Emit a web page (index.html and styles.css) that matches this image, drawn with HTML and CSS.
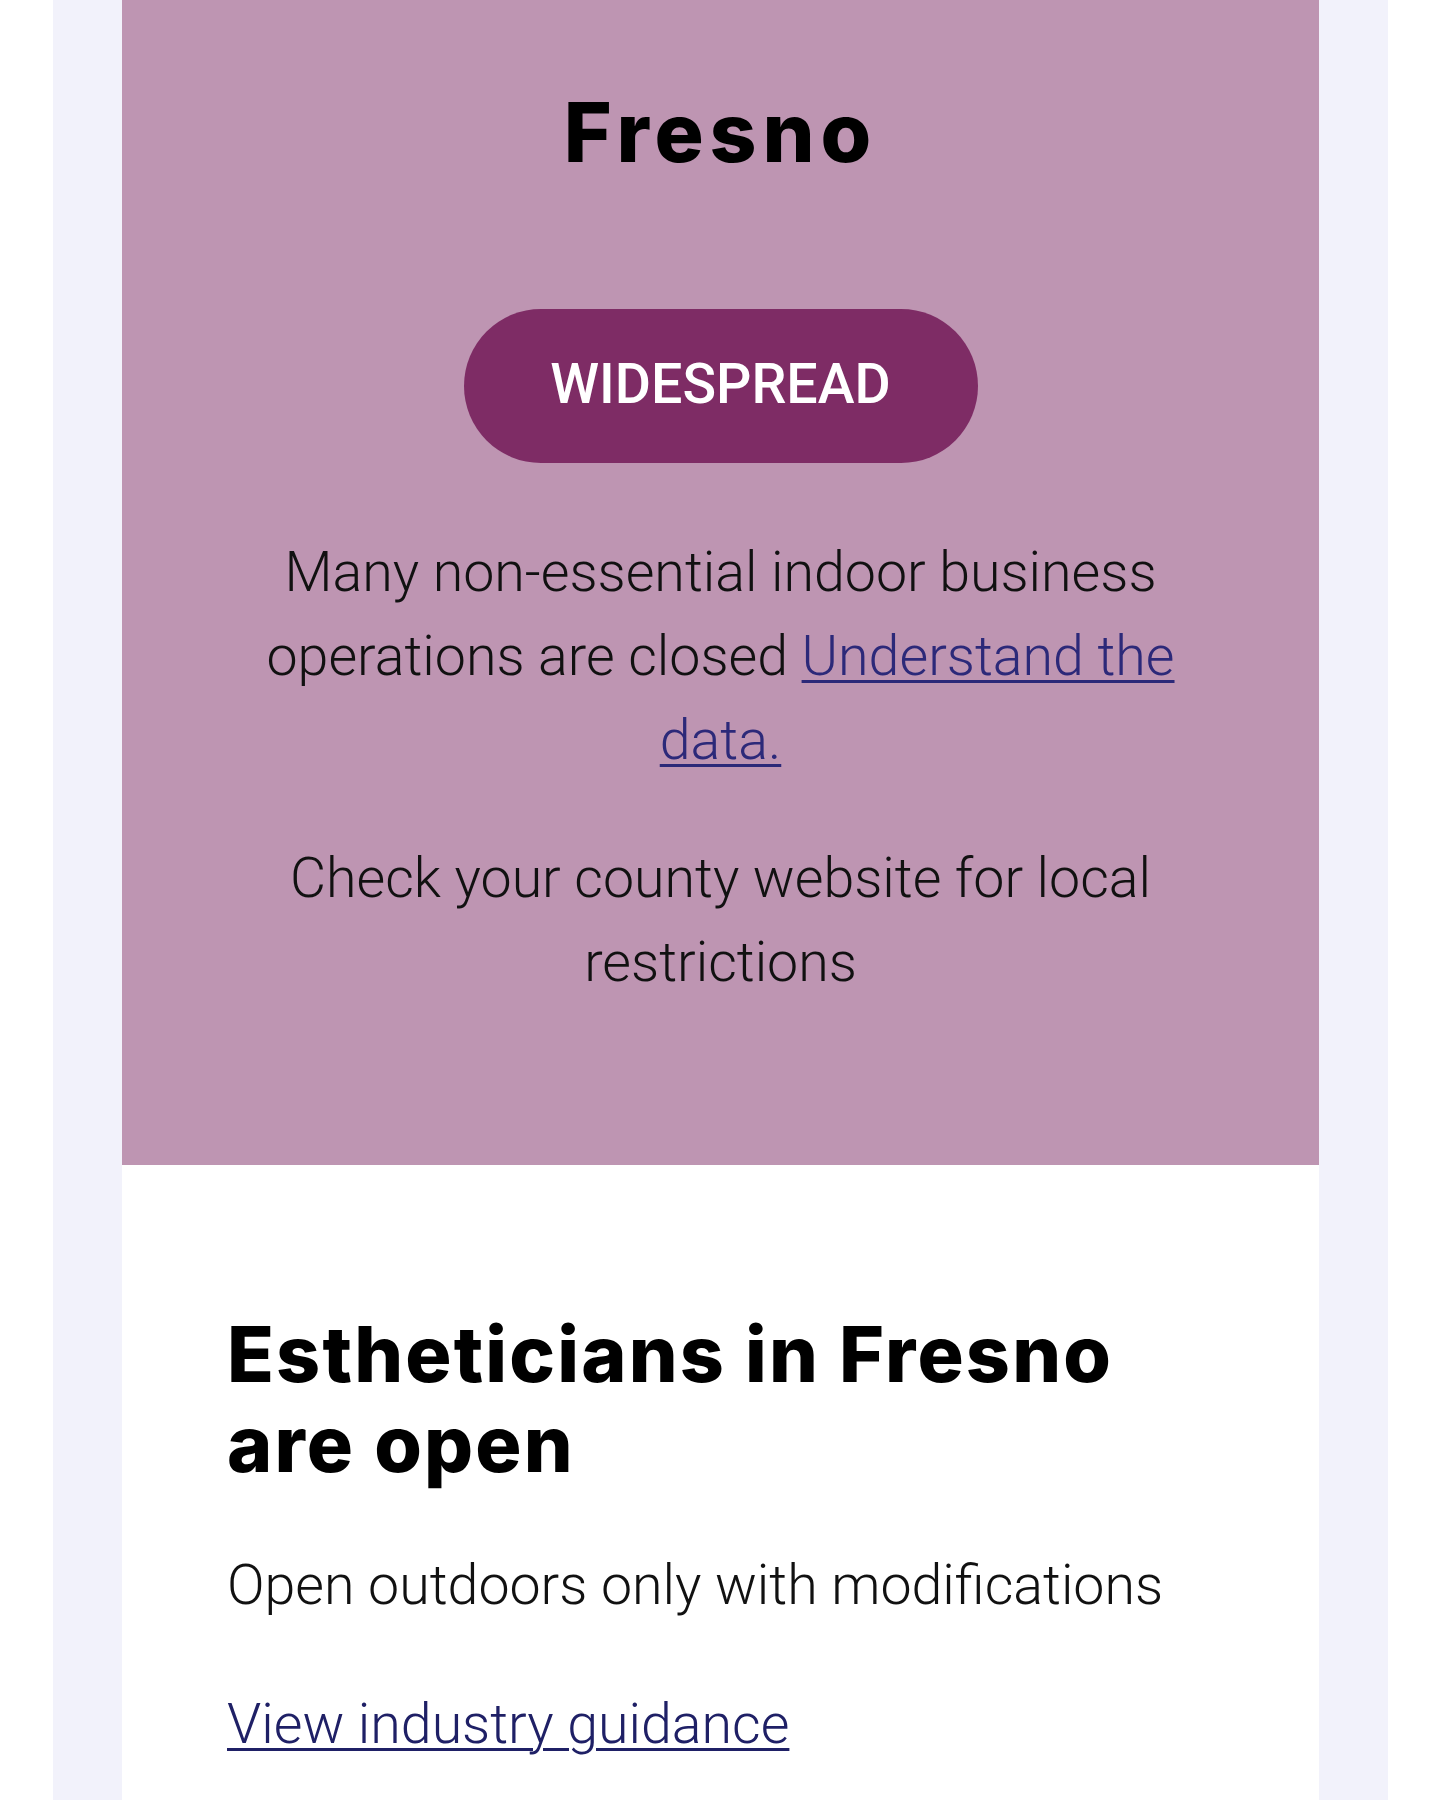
FILE: index.html
```html
<!DOCTYPE html>
<html lang="en">
<head>
<meta charset="utf-8">
<title>Fresno</title>
<link rel="stylesheet" href="styles.css">
</head>
<body>
  <div class="page">
    <main class="card">
      <section class="status">
        <h1 class="county">Fresno</h1>
        <div class="pill">WIDESPREAD</div>
        <p class="status-text">Many non-essential indoor business operations are closed <a href="#" class="link">Understand the data.</a></p>
        <p class="status-text second">Check your county website for local restrictions</p>
      </section>
      <section class="result">
        <h2 class="result-title">Estheticians in Fresno are open</h2>
        <p class="result-text">Open outdoors only with modifications</p>
        <p class="result-text"><a href="#" class="link link-dark">View industry guidance</a></p>
      </section>
    </main>
  </div>
</body>
</html>
```

FILE: styles.css
```css
html, body {
  margin: 0;
  padding: 0;
  background: #ffffff;
}

body {
  font-family: Roboto, "Liberation Sans", Arial, sans-serif;
  color: #111111;
}

.page {
  margin-left: 53px;
  width: 1335px;
  padding: 0 69px;
  box-sizing: border-box;
  background: #f2f2fb;
  min-height: 1800px;
}

.card {
  display: flex;
  flex-direction: column;
}

.status {
  background: #be95b2;
  padding: 84px 100px 160px;
  display: flex;
  flex-direction: column;
  align-items: center;
  text-align: center;
}

.county {
  margin: 0;
  font-family: Inter, "Open Sans", sans-serif;
  font-weight: 800;
  font-size: 82px;
  line-height: 98px;
  letter-spacing: 0.072em;
  color: #000000;
}

.pill {
  margin-top: 127px;
  background: #7e2c65;
  color: #ffffff;
  font-family: Roboto, sans-serif;
  font-weight: 500;
  font-size: 55.5px;
  line-height: 64px;
  padding: 44px 0 46px;
  width: 514px;
  border-radius: 77px;
  text-align: center;
  box-sizing: border-box;
}

.status-text {
  margin: 68px 0 0;
  font-family: Roboto, sans-serif;
  font-weight: 300;
  font-size: 55.5px;
  line-height: 84px;
  color: #111111;
}

.status-text.second {
  margin-top: 54px;
}

.link {
  color: #2c2979;
  text-decoration: underline;
  text-decoration-thickness: 3px;
  text-underline-offset: 5px;
}

.link-dark {
  color: #1f2066;
}

.result {
  background: #ffffff;
  padding: 144px 105px 60px;
}

.result-title {
  margin: 0;
  font-family: Inter, "Open Sans", sans-serif;
  font-weight: 800;
  font-size: 77px;
  line-height: 90px;
  letter-spacing: 0.028em;
  color: #000000;
}

.result-text {
  margin: 55px 0 0;
  font-family: Roboto, sans-serif;
  font-weight: 300;
  font-size: 55.5px;
  line-height: 84px;
  color: #111111;
}
```
